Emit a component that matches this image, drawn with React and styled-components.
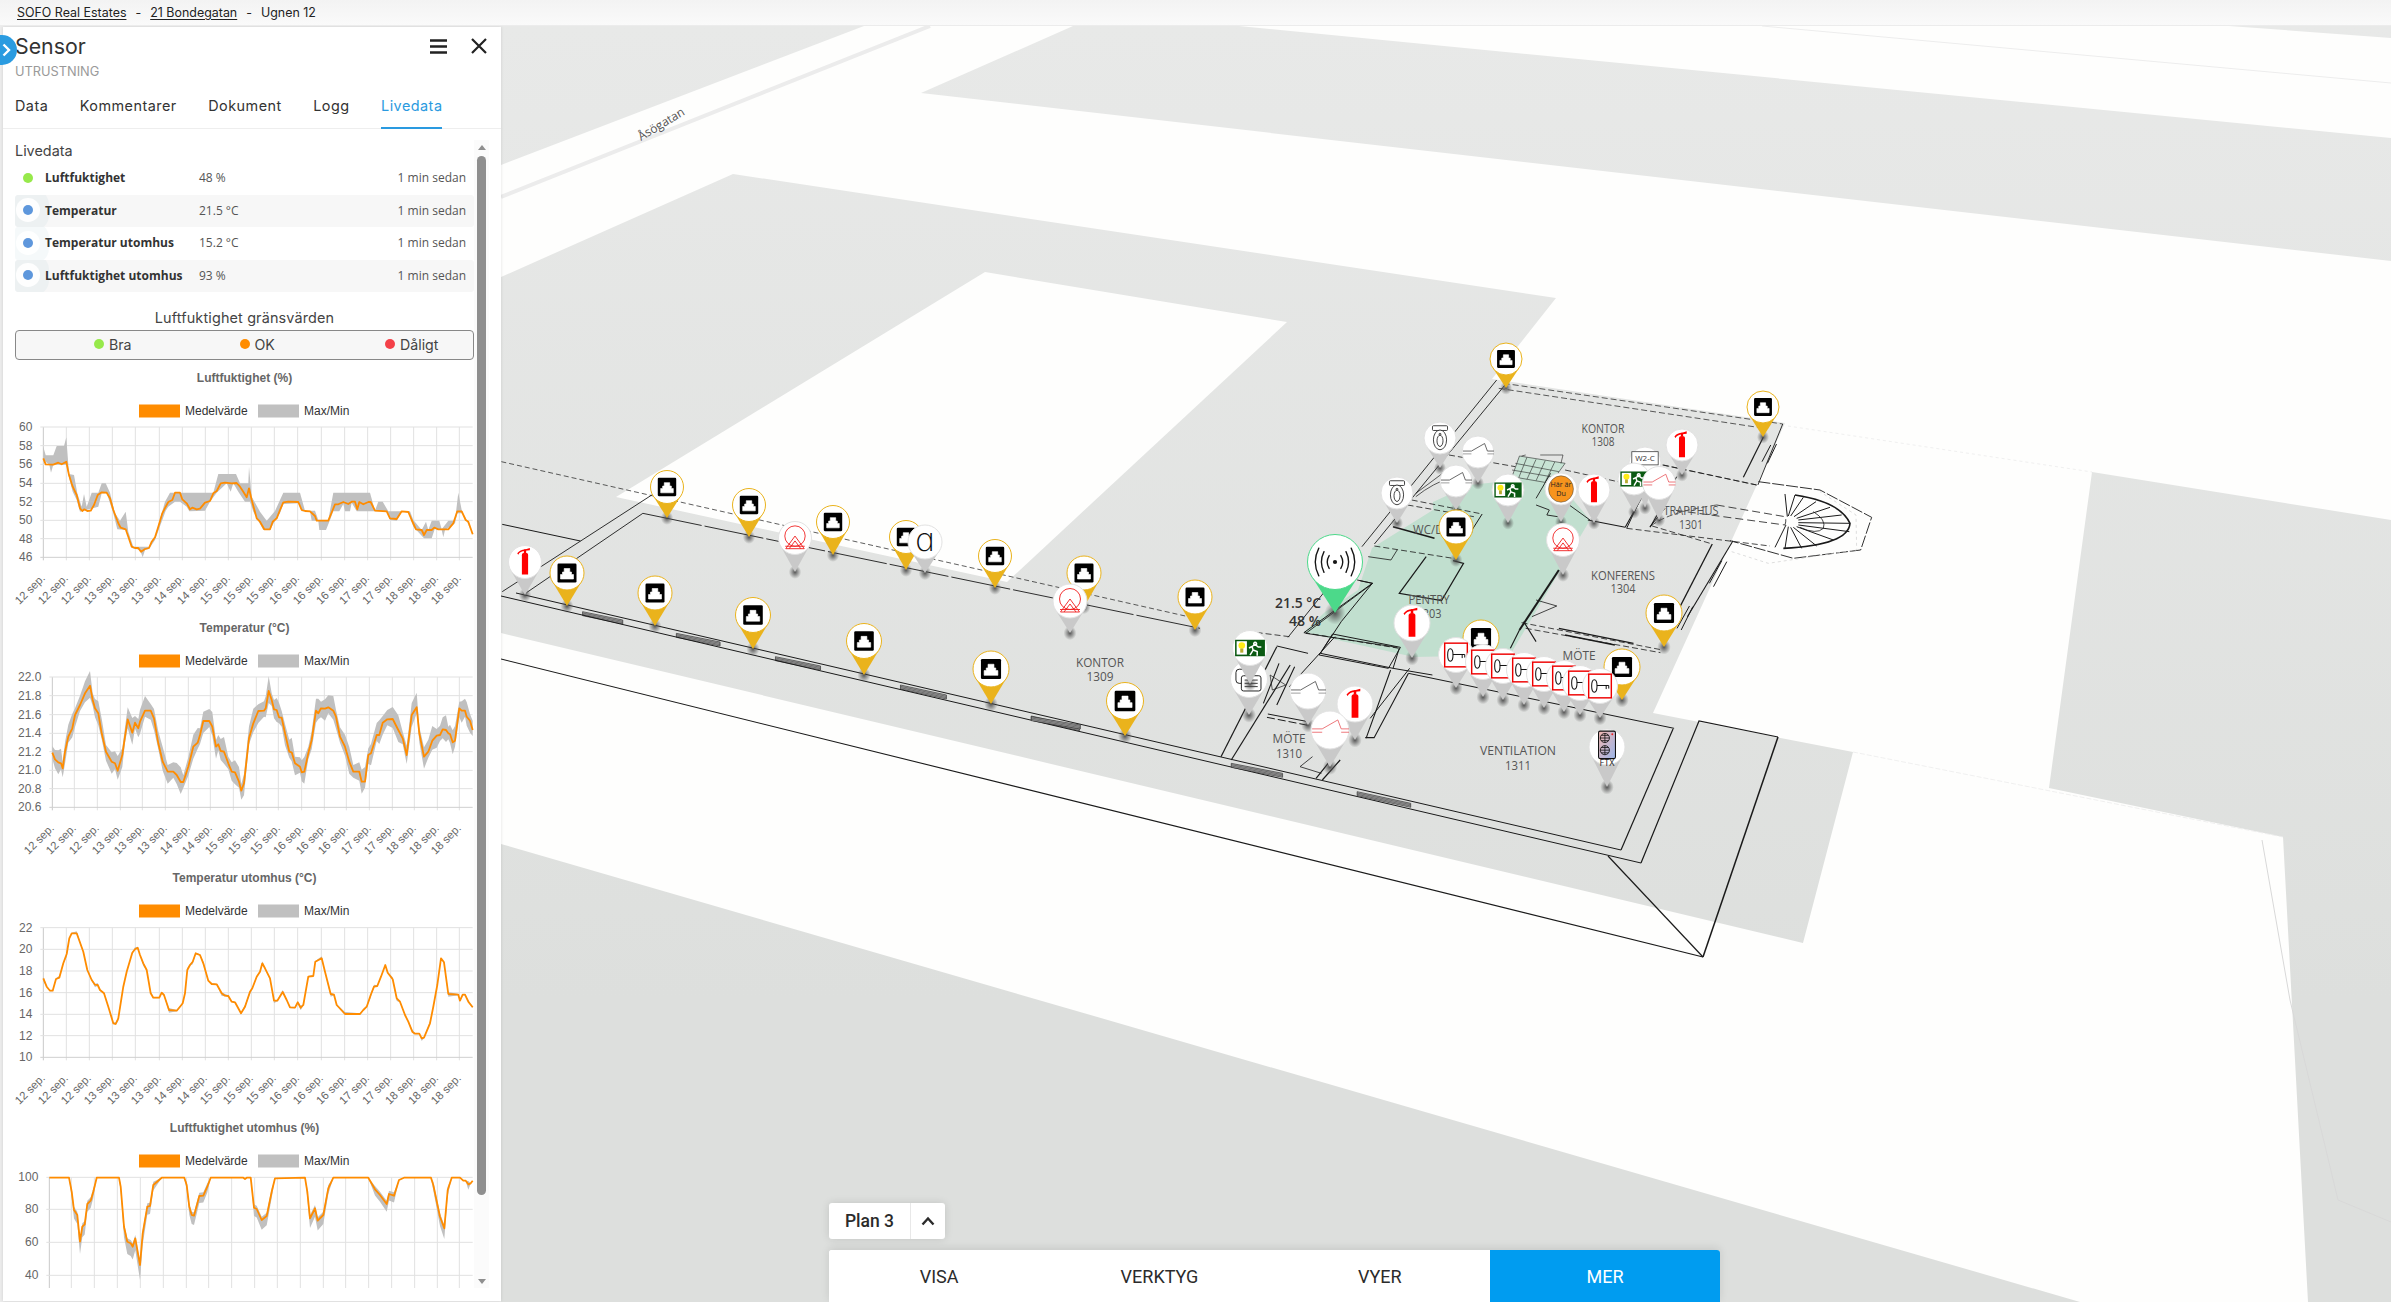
import React from 'react';
import styled, { createGlobalStyle } from 'styled-components';

const Global = createGlobalStyle`
  html, body { margin: 0; padding: 0; height: 100%; background: #fefefd; }
  #root { height: 100%; }
  * { box-sizing: border-box; }
`;

const Page = styled.div`
  width: 2391px; height: 1302px; display: flex; flex-direction: column; overflow: hidden;
  font-family: Inter, "Noto Sans", sans-serif; color: #333; background: #fefefd;
`;
const TopBar = styled.header`
  height: 26px; flex: none; display: flex; align-items: center; gap: 9px; padding: 0 17px;
  background: linear-gradient(#f3f3f3, #fafafa); border-bottom: 1px solid #ececec;
  font-size: 12.45px; color: #222; z-index: 3;
`;
const Crumb = styled.a`
  color: #222; text-decoration: underline; text-underline-offset: 2px;
`;
const Main = styled.main`
  flex: 1; min-height: 0; display: flex; padding-left: 3px; background: #ececec;
`;
const Panel = styled.aside`
  position: relative; margin-top: 1px; width: 498px; height: 1274px; flex: none; background: #fff; display: flex; flex-direction: column;
  padding-bottom: 13px; box-shadow: 0 0 3px rgba(0,0,0,.12); z-index: 2;
`;
const Toggle = styled.button`
  position: absolute; left: -16px; top: 8px; width: 30px; height: 30px; border: 0; padding: 0; border-radius: 50%;
  background: #2a9be0; display: flex; align-items: center; justify-content: flex-end; padding-right: 6px;
`;
const Head = styled.div`
  display: flex; justify-content: space-between; padding: 4px 14px 0 12px;
`;
const Title = styled.h1`
  margin: 0; font-size: 21.3px; font-weight: 400; line-height: 30px; color: #333;
`;
const Sub = styled.div`
  margin-top: 1px; font-size: 12.8px; line-height: 20px; color: #9a9a9a; padding-left: 12px;
`;
const HeadIcons = styled.div`
  display: flex; gap: 24px; align-items: center; height: 30px;
`;
const Tabs = styled.nav`
  height: 47px; flex: none; display: flex; border-bottom: 1px solid #eee; padding-left: 12px;
`;
const Tab = styled.a`
  height: 47px; margin-right: 31.5px; padding-top: 14px; font-size: 14.4px; line-height: 20px; font-weight: 400; color: ${p => p.$active ? '#2a9ae0' : '#333'};
  border-bottom: 2px solid ${p => p.$active ? '#2a9ae0' : 'transparent'}; letter-spacing: .48px;
`;
const Body = styled.div`
  flex: 1; min-height: 0; display: flex; padding: 11px 12px 0;
`;
const Scroller = styled.div`
  width: 459px; flex: none; overflow: hidden; height: 1148px;
`;
const Section = styled.div`
  font-size: 14.4px; line-height: 22px; color: #444;
`;
const Row = styled.div`
  height: 32.5px; display: grid; grid-template-columns: 30px 154px 1fr auto; align-items: center; padding: 0 8px 1px 0; overflow: hidden;
  background: ${p => p.$alt ? '#f7f7f7' : '#fff'}; border-radius: 3px; font-family: "Open Sans", "Noto Sans", sans-serif; font-size: 12px; color: #555;
`;
const Dot = styled.span`
  justify-self: start; margin-left: 8px; width: 10px; height: 10px; border-radius: 50%; background: ${p => p.$c};
  box-shadow: ${p => p.$halo ? '0 0 0 7px rgba(255,255,255,.9), 0 0 0 16px rgba(120,170,190,.07)' : 'none'};
`;
const Name = styled.span`
  font-weight: 700; color: #333; font-size: 12px; white-space: nowrap;
`;
const Cap = styled.div`
  margin-top: 15px; height: 22px; font-size: 14.4px; line-height: 22px; text-align: center; color: #444; letter-spacing: .15px;
`;
const LimitBox = styled.div`
  margin-top: 1px; height: 30px; border: 1px solid #888; border-radius: 4px; background: #f7f7f7; padding-bottom: 2px;
  display: grid; grid-template-columns: repeat(3, 145.5px); padding-left: 78px; align-items: center; font-size: 14.2px; color: #444;
`;
const Limit = styled.span`
  display: flex; align-items: center; gap: 5px;
`;
const LimitDot = styled.i`
  width: 10px; height: 10px; border-radius: 50%; background: ${p => p.$c};
`;
const ChartList = styled.div`
  margin-top: 5px; display: flex; flex-direction: column;
`;
const ChartSvg = styled.svg`
  display: block; width: 459px; height: 250px; flex: none; font-family: "Liberation Sans", Arial, sans-serif;
`;
const Track = styled.div`
  width: 15px; flex: none; height: 1148px; background: #fbfbfb; display: flex; flex-direction: column; align-items: center; padding: 5px 0 4px;
`;
const Thumb = styled.div`
  width: 9px; height: 1039px; margin-top: 6px; background: #8f8f8f; border-radius: 5px; flex: none;
`;
const ArrowUp = styled.div`
  width: 0; height: 0; border-left: 4.5px solid transparent; border-right: 4.5px solid transparent; border-bottom: 5px solid #8f8f8f; flex: none;
`;
const ArrowDown = styled(ArrowUp)`
  margin-top: auto; border-bottom: 0; border-top: 5px solid #8f8f8f;
`;
const MapArea = styled.section`
  position: relative; flex: 1; min-width: 0; background: #fefefd;
`;
const MapSvg = styled.svg`
  display: block; width: 1890px; height: 1276px; font-family: "Open Sans", "Noto Sans", sans-serif;
  path, line, polyline { vector-effect: non-scaling-stroke; }
`;
const Controls = styled.div`
  position: absolute; left: 328px; bottom: 0; display: flex; flex-direction: column; align-items: flex-start; gap: 11px;
  font-family: Roboto, sans-serif; color: #2b2b2b;
`;
const PlanBox = styled.div`
  height: 36px; width: 116px; display: grid; grid-template-columns: 81px 1fr; background: #fff; border-radius: 3px;
  box-shadow: 0 0 8px rgba(0,0,0,.12);
`;
const PlanLabel = styled.span`
  display: flex; align-items: center; justify-content: center; font-size: 17.5px; font-weight: 500;
`;
const PlanArrow = styled.span`
  display: flex; align-items: center; justify-content: center; border-left: 1px solid #e8e8e8;
`;
const Toolbar = styled.div`
  width: 891px; height: 52px; display: grid; grid-template-columns: repeat(3, 220.33px) 1fr; background: #fff; border-radius: 3px 3px 0 0;
  box-shadow: 0 -2px 8px rgba(0,0,0,.1); overflow: hidden;
`;
const ToolTab = styled.button`
  border: 0; font-family: Roboto, sans-serif; font-size: 18px; font-weight: 400; padding: 0; background: ${p => p.$active ? '#009cf0' : '#fff'}; color: ${p => p.$active ? '#fff' : '#2b2b2b'};
`;

/* ---------- chart data, written in crop coordinates (3 px per page px) ---------- */
const parse = s => s.trim().split(/\s+/).map(p => p.split(',').map(Number));
const D = {
  a1: parse(`130,325 137,343 160,344 175,338 185,343 199,335 207,375 218,410 230,435 240,475 247,483 253,478 262,483 272,482 282,465 293,435 305,427 320,428 330,445 340,480 355,520 362,533 377,538 385,560 395,590 405,594 415,594 423,605 435,597 447,594 455,575 465,562 475,530 487,490 497,470 505,456 517,450 525,428 540,428 547,448 560,460 570,478 577,473 590,478 600,476 615,458 630,453 640,430 650,423 662,400 675,398 695,400 710,399 720,410 730,425 740,442 747,415 755,450 770,505 780,515 793,538 810,538 818,515 830,505 840,480 850,457 865,455 895,456 905,480 915,483 930,484 945,498 950,512 985,512 998,480 1005,463 1015,463 1030,456 1045,462 1055,455 1065,455 1072,478 1078,456 1090,463 1105,456 1112,456 1125,482 1160,484 1170,505 1190,507 1205,484 1225,486 1235,510 1248,538 1265,540 1272,555 1280,540 1295,540 1303,533 1315,538 1345,538 1360,520 1372,484 1385,484 1397,510 1405,515 1418,553`),
  u1: parse(`130,290 137,316 160,316 170,288 192,288 199,262 207,372 222,375 232,430 245,470 252,432 260,470 275,428 295,428 305,400 317,400 330,428 345,490 360,512 377,485 385,545 400,590 423,590 447,590 465,560 495,455 510,428 640,428 655,372 708,372 720,400 745,400 747,350 755,440 780,485 800,512 825,483 850,428 900,428 915,482 945,482 955,510 985,510 1000,428 1110,428 1125,482 1135,455 1148,455 1165,484 1230,484 1240,510 1265,540 1278,515 1285,540 1295,512 1318,512 1325,538 1345,512 1365,512 1375,428 1385,480 1418,553`),
  l1: parse(`130,330 148,344 153,368 160,344 199,344 210,395 218,425 230,450 240,485 295,470 305,430 320,430 340,490 352,538 380,540 395,594 420,600 428,622 435,600 447,597 465,570 487,510 497,482 505,470 525,455 540,455 560,470 568,484 615,482 630,455 650,428 680,400 692,425 700,400 715,425 735,455 750,455 760,485 775,512 790,540 810,540 825,512 840,490 850,462 895,460 905,484 930,484 935,512 955,512 958,540 978,540 990,510 1000,484 1018,484 1030,462 1035,484 1050,484 1055,458 1070,484 1160,484 1170,510 1190,512 1205,486 1225,486 1240,530 1272,565 1295,565 1305,535 1325,540 1330,562 1335,540 1365,520 1372,490 1390,490 1405,520 1418,555`),
  a2: parse(`157,1208 165,1228 175,1237 183,1240 188,1255 195,1205 205,1160 217,1135 225,1095 240,1065 255,1030 270,1007 278,1050 285,1075 295,1090 305,1150 318,1205 335,1235 345,1240 353,1262 367,1215 375,1160 383,1108 397,1148 405,1118 415,1135 420,1115 435,1082 452,1082 462,1105 475,1180 488,1235 503,1265 520,1265 530,1275 542,1296 550,1296 565,1250 580,1190 593,1178 600,1155 610,1113 628,1113 637,1130 648,1190 655,1183 662,1203 672,1205 685,1240 695,1265 705,1267 717,1295 724,1322 732,1300 747,1165 760,1120 775,1083 792,1082 797,1075 806,1023 815,1050 822,1078 830,1080 837,1102 845,1103 855,1150 868,1205 875,1207 885,1240 900,1250 905,1267 913,1265 925,1210 935,1170 948,1082 955,1090 963,1075 975,1076 985,1072 1000,1082 1008,1100 1020,1160 1035,1190 1048,1235 1060,1265 1078,1265 1085,1295 1095,1295 1105,1215 1113,1210 1130,1155 1138,1155 1148,1118 1162,1108 1178,1107 1195,1140 1208,1165 1220,1215 1235,1095 1250,1072 1258,1150 1272,1220 1285,1205 1297,1172 1310,1157 1320,1155 1328,1138 1338,1140 1345,1150 1350,1152 1358,1177 1365,1172 1378,1075 1385,1082 1395,1082 1400,1100 1410,1112 1418,1140`),
  a3: parse(`130,445 140,470 150,482 158,482 168,447 178,443 190,400 200,372 208,325 215,310 230,310 250,365 262,420 275,450 285,464 293,465 300,480 312,490 325,530 340,580 347,582 355,565 370,470 380,425 397,368 405,358 413,353 420,375 430,400 440,420 452,490 460,503 478,503 485,488 492,495 507,540 530,542 540,530 548,520 555,490 562,420 570,405 578,395 587,370 600,375 610,400 625,452 635,462 650,463 665,490 675,497 685,498 695,515 705,517 723,550 735,530 750,485 757,475 770,440 780,425 787,400 795,415 810,445 822,512 832,512 848,486 860,510 870,532 885,533 893,517 902,533 910,525 925,440 940,438 946,395 965,385 975,425 992,492 1002,494 1010,525 1035,552 1080,552 1090,540 1100,530 1112,495 1122,470 1132,468 1143,440 1156,405 1163,428 1178,448 1190,505 1200,515 1215,555 1225,575 1237,605 1245,611 1258,611 1265,625 1272,623 1290,580 1300,530 1312,465 1323,385 1332,397 1345,492 1375,494 1380,512 1388,494 1395,494 1405,515 1418,532`),
  a4: parse(`148,1043 207,1043 215,1085 222,1140 232,1155 240,1235 247,1190 254,1183 262,1122 272,1112 280,1085 290,1043 357,1043 362,1070 372,1190 382,1235 392,1240 398,1250 406,1225 420,1305 428,1210 442,1130 450,1128 460,1065 485,1043 553,1043 560,1065 568,1130 575,1155 582,1157 598,1098 610,1097 622,1070 632,1043 730,1043 735,1047 740,1043 752,1043 762,1133 770,1137 785,1170 800,1158 815,1085 825,1045 915,1043 922,1085 930,1165 945,1135 953,1172 970,1155 985,1075 1000,1043 1105,1043 1125,1078 1140,1095 1160,1122 1167,1092 1182,1097 1197,1050 1212,1043 1293,1043 1300,1065 1320,1160 1333,1195 1343,1080 1355,1043 1380,1043 1390,1052 1397,1052 1405,1063 1412,1060 1418,1052`),
};
const offset = (arr, f) => arr.map(([x, y], i) => [x, y + f(y, i)]);
const LABELS = ['12','12','12','13','13','13','14','14','15','15','15','16','16','16','17','17','18','18','18'];
const CHARTS = [
  { title: 'Luftfuktighet (%)', off: -15, line: D.a1, up: D.u1, lo: D.l1,
    xs: [130,199,268,337,406,478,547,616,685,754,823,893,964,1034,1103,1172,1241,1310,1378],
    ys: [[231,'60'],[287,'58'],[343,'56'],[400,'54'],[455,'52'],[511,'50'],[566,'48'],[622,'46']] },
  { title: 'Temperatur (°C)', off: -265, line: D.a2,
    up: offset(D.a2, (y, i) => -20 - (i % 4) * 8), lo: offset(D.a2, (y, i) => 18 + (i % 3) * 9),
    xs: [157,223,292,361,427,496,565,631,700,769,835,905,973,1039,1108,1177,1243,1312,1378],
    ys: [[981,'22.0'],[1037,'21.8'],[1094,'21.6'],[1150,'21.4'],[1205,'21.2'],[1261,'21.0'],[1316,'20.8'],[1372,'20.6']] },
  { title: 'Temperatur utomhus (°C)', off: -35, line: D.a3,
    up: offset(D.a3, (y, i) => (i % 5 === 0 ? -6 : -2)), lo: offset(D.a3, (y, i) => (i % 7 === 0 ? 8 : 2)),
    xs: [130,199,268,337,406,478,547,616,685,754,823,893,964,1034,1103,1172,1241,1310,1378],
    ys: [[293,'22'],[358,'20'],[423,'18'],[488,'16'],[553,'14'],[617,'12'],[682,'10']] },
  { title: 'Luftfuktighet utomhus (%)', off: -285, line: D.a4, clipped: true,
    up: offset(D.a4, (y) => (y > 1060 ? -10 : 0)), lo: offset(D.a4, (y) => (y > 1060 ? 16 + (y - 1060) * .12 : 1)),
    xs: [148,214,283,352,421,490,559,626,695,764,832,901,970,1037,1106,1175,1244,1312,1378],
    ys: [[1042,'100'],[1138,'80'],[1237,'60'],[1336,'40'],[1434,'']] },
];
const toPts = (arr, off) => arr.map(([x, y]) => `${(x / 3).toFixed(1)},${(y / 3 + off).toFixed(1)}`).join(' ');

function Chart({ c }) {
  const top = c.ys[0][0] / 3 + c.off;
  const bottom = c.ys[c.ys.length - 1][0] / 3 + c.off;
  return (
    <ChartSvg viewBox="15 0 459 250">
      <text x="244.5" y="17" textAnchor="middle" fontSize="12" fontWeight="700" fill="#666">{c.title}</text>
      <rect x="139" y="39.5" width="41" height="13" fill="#ff8c00" />
      <text x="185" y="50" fontSize="12" fill="#333">Medelvärde</text>
      <rect x="258" y="39.5" width="41" height="13" fill="#c0c0c0" />
      <text x="304" y="50" fontSize="12" fill="#333">Max/Min</text>
      {c.xs.map((x, i) => (
        <line key={i} x1={x / 3} x2={x / 3} y1={top} y2={bottom + 3} stroke={i === 0 ? '#c9c9c9' : '#e1e1e1'} strokeWidth="1" />
      ))}
      {c.ys.map(([y, t], i) => (
        <g key={i}>
          <line x1={c.xs[0] / 3 - 3} x2="472.7" y1={y / 3 + c.off} y2={y / 3 + c.off} stroke={i === c.ys.length - 1 ? '#cfcfcf' : '#e1e1e1'} strokeWidth="1" />
          {t && <text x={c.xs[0] / 3 - 11} y={y / 3 + c.off + 4} textAnchor="end" fontSize="12" fill="#666">{t}</text>}
        </g>
      ))}
      <polygon points={toPts(c.up, c.off) + ' ' + toPts([...c.lo].reverse(), c.off)} fill="#c0c0c0" />
      <polyline points={toPts(c.line, c.off)} fill="none" stroke="#ff8c00" strokeWidth="1.8" strokeLinejoin="round" />
      {!c.clipped && c.xs.map((x, i) => (
        <text key={i} transform={`translate(${x / 3 + 2.4} ${bottom + 21.5}) rotate(-45)`} textAnchor="end" fontSize="11.3" fill="#666">{LABELS[i]} sep.</text>
      ))}
    </ChartSvg>
  );
}

/* ---------- pin icons ---------- */
const PortIcon = () => (
  <g>
    <rect x="-9.5" y="-9.5" width="19" height="19" rx="1.2" fill="#000" />
    <path d="M-6.5,6 V1.5 H-4.5 V-1 H-2.8 V-4.5 H2.8 V-1 H4.5 V1.5 H6.5 V6 Z" fill="#fff" stroke="#fff" strokeWidth=".6" strokeLinejoin="round" />
  </g>
);
const ExtIcon = () => (
  <g fill="#f00">
    <path d="M-3.2,-7 Q-3.2,-9.5 0,-9.5 Q3.2,-9.5 3.2,-7 V13 H-3.2 Z" />
    <rect x="-1.2" y="-13" width="2.4" height="4" />
    <path d="M-8,-9 Q-5,-13 0,-13 L5,-14.5 V-12 L0,-11.5 Q-5,-11 -7,-7.5 Z" />
  </g>
);
const HoodIcon = () => (
  <g fill="none" stroke="#f01c1c" strokeWidth=".9">
    <circle cx="0" cy="-2" r="10.5" />
    <path d="M-9.5,11 L0,-2 L9.5,11 Z M-6,11 L0,3 L6,11 M-10,8.5 H10" />
  </g>
);
const StairIcon = ({ c = '#444' }) => (
  <g fill="none" stroke={c} strokeWidth=".8">
    <path d="M-16,-1 H-7 L7,-9 L10,-1 H17" />
    <path d="M-16,2 H-7 M10,2 H17" stroke={c === '#444' ? '#888' : c} />
  </g>
);
const ToiletIcon = () => (
  <g fill="#fff" stroke="#222" strokeWidth=".9">
    <rect x="-8" y="-13" width="16" height="5" rx="1" />
    <ellipse cx="0" cy="2" rx="7" ry="10.5" />
    <ellipse cx="0" cy="3" rx="3.2" ry="6" />
    <circle cx="0" cy="-4" r="1" />
  </g>
);
const ExitIcon = () => (
  <g>
    <rect x="-14.5" y="-8" width="29" height="16" fill="#0a5a12" />
    <rect x="-13" y="-6.6" width="10" height="13" fill="#fff" />
    <circle cx="-8" cy="-2.5" r="3.2" fill="#ffec17" />
    <rect x="-9.5" y="0.5" width="3" height="4" fill="#b8ac30" />
    <path d="M5,-5.5 a1.4,1.4 0 1 0 .01,0 M0,7 L3,2 L2,-1.5 L5,-3.5 L8,-1 H11 M3,2 L7,3.5 L7,7.5 M2,-1.5 L-1,0" stroke="#fff" strokeWidth="1.5" fill="none" />
  </g>
);
const KeyIcon = () => (
  <g>
    <rect x="-11" y="-11.5" width="22" height="23" fill="#fff" stroke="#e00" strokeWidth="1.4" />
    <ellipse cx="-5.5" cy="0" rx="2.6" ry="6" fill="none" stroke="#111" strokeWidth="1" />
    <path d="M-3,-.5 H8.5 M6,-.5 V3 M8.5,-.5 V2.5" stroke="#111" strokeWidth="1" fill="none" />
  </g>
);
const FtxIcon = () => (
  <g>
    <defs>
      <linearGradient id="ftxg" x1="0" y1="0" x2="1" y2="1">
        <stop offset="0" stopColor="#f3b7b0" />
        <stop offset="1" stopColor="#9bb6ea" />
      </linearGradient>
    </defs>
    <rect x="-8" y="-15" width="16" height="26" rx="1.5" fill="url(#ftxg)" stroke="#111" strokeWidth="1" />
    <g fill="none" stroke="#111" strokeWidth=".8">
      <circle cx="-2" cy="-8.5" r="4.3" /><path d="M-6.3,-8.5 H2.3 M-2,-12.8 V-4.2 M-5.5,-11 H1.5 M-5.5,-6 H1.5" />
      <circle cx="-2" cy="3" r="4.3" /><path d="M-6.3,3 H2.3 M-2,-1.3 V7.3 M-5.5,.5 H1.5 M-5.5,5.5 H1.5" />
    </g>
    <circle cx="5" cy="-12" r=".9" fill="#e22" />
    <text y="18" textAnchor="middle" fontSize="8.5" fill="#222">FTX</text>
  </g>
);
const PrinterIcon = () => (
  <g fill="#fff" stroke="#222" strokeWidth=".9">
    <rect x="-12" y="-9" width="11" height="13" rx="3" />
    <rect x="-7" y="-3" width="18" height="14" rx="2" />
    <path d="M-4,1 H8 M-4,4 H8 M-4,7 H8" />
  </g>
);
const AIcon = () => (
  <text x="0" y="9" textAnchor="middle" fontSize="33" fontWeight="200" fontFamily="Inter, sans-serif" fill="#111">ɑ</text>
);
const WcIcon = () => (
  <g>
    <rect x="-14" y="-12" width="28" height="14" fill="#fff" stroke="#333" strokeWidth=".8" />
    <text y="-2" textAnchor="middle" fontSize="8.5" fill="#333">W2-C</text>
  </g>
);
const Radio = () => (
  <g fill="none" stroke="#151515" strokeWidth="1.35" strokeLinecap="round">
    <circle cx="0" cy="0" r="1.3" fill="#151515" stroke="none" />
    <path d="M-3.6,-4 Q-6,0 -3.6,4 M3.6,-4 Q6,0 3.6,4 M-6.8,-6.4 Q-10,0 -6.8,6.4 M6.8,-6.4 Q10,0 6.8,6.4 M-10,-8.6 Q-14.4,0 -10,8.6 M10,-8.6 Q14.4,0 10,8.6" />
  </g>
);
const Here = () => (
  <g>
    <ellipse rx="13.2" ry="14" fill="#f7941d" stroke="#333" strokeWidth=".5" />
    <text y="-2" textAnchor="middle" fontSize="7.6" fill="#222">Här är</text>
    <text y="7" textAnchor="middle" fontSize="7.6" fill="#222">Du</text>
  </g>
);
const ICONS = {
  port: PortIcon, ext: ExtIcon, hood: HoodIcon, stair: StairIcon, stairRed: () => <StairIcon c="#e8555b" />,
  toilet: ToiletIcon, exit: ExitIcon, key: KeyIcon, ftx: FtxIcon, printer: PrinterIcon, a: AIcon, wc: WcIcon, radio: Radio, here: Here,
};

function Pin({ x, y, tip, r = 17, icon, tone = 'gray' }) {
  const Icon = ICONS[icon];
  const cone = tone === 'yellow' ? '#eab31c' : tone === 'green' ? '#4cd98a' : '#c9c9c9';
  const stroke = tone === 'yellow' ? '#eab31c' : tone === 'green' ? '#4cd98a' : '#e2e2e2';
  const h = tip - y;
  const tx = (r * r) / h;
  const ty = Math.sqrt(Math.max(r * r - tx * tx, 0));
  return (
    <g>
      <ellipse cx={x} cy={tip} rx={r * .38} ry={r * .42} fill="url(#pinShadow)" />
      <path d={`M${x - ty},${y + tx} L${x},${tip} L${x + ty},${y + tx} Z`} fill={cone} />
      <circle cx={x} cy={y} r={r} fill="#fff" stroke={stroke} strokeWidth="1" />
      <g transform={`translate(${x} ${y}) scale(${r / 17})`}><Icon /></g>
    </g>
  );
}

const PINS = [
  ['port',667,487,518,'yellow',16.5],['port',749,505,537,'yellow',16.5],['hood',795,538,572,'gray',16.5],['port',833,522,555,'yellow',16.5],
  ['port',906,537,570,'yellow',16.5],['a',925,542,573,'gray',17],['port',995,556,588,'yellow',16.5],
  ['ext',525,562,595,'gray',16.5],['port',567,573,606,'yellow',17],['port',655,593,626,'yellow',17],['port',753,615,649,'yellow',17.5],
  ['port',864,641,675,'yellow',17.5],['port',1084,573,607,'yellow',17],['hood',1070,601,633,'gray',17],['port',1195,597,630,'yellow',17],
  ['port',991,669,704,'yellow',18],['port',1125,701,736,'yellow',18.5],
  ['printer',1249,679,715,'gray',18.5],['exit',1250,648,684,'gray',17.5],['stair',1308,691,725,'gray',18],['ext',1355,704,740,'gray',18],['stairRed',1330,730,767,'gray',19],
  ['port',1506,359,388,'yellow',16],['port',1763,407,437,'yellow',16],['toilet',1440,438,468,'gray',16],['stair',1478,452,483,'gray',16],
  ['toilet',1397,493,523,'gray',16],['stair',1456,481,510,'gray',16],['exit',1508,490,523,'gray',16],['here',1561,489,522,'gray',16],['ext',1594,490,523,'gray',16],
  ['ext',1682,445,475,'gray',16],['wc',1645,463,508,'gray',16],['exit',1634,479,512,'gray',16],['stairRed',1659,483,520,'gray',16.5],
  ['port',1456,527,560,'yellow',17],['hood',1563,540,575,'gray',16.5],['radio',1335,562,613,'green',27.5],['ext',1412,623,658,'gray',18],['port',1664,613,647,'yellow',18],
  ['port',1481,638,670,'yellow',18],['port',1622,667,700,'yellow',18],
  ['key',1456,655,688,'gray',17.5],['key',1483,662,697,'gray',17.5],['key',1503,666,700,'gray',17.5],['key',1524,670,705,'gray',17.5],
  ['key',1544,674,708,'gray',17.5],['key',1564,678,712,'gray',17.5],['key',1580,683,715,'gray',17.5],['key',1600,686,718,'gray',17.5],
  ['ftx',1607,747,787,'gray',18],
];

/* ---------- floor-plan line work, written in crop coordinates ---------- */
const Z6 = 'translate(500 460) scale(.44643 .33333)';
const Z5 = 'translate(1000 560) scale(.44643 .33333)';
const Z4 = 'translate(1250 320) scale(.41459 .33333)';
const Z12 = 'translate(1600 420) scale(.33333)';

const Stroke = ({ d, w = 1, dash, c = '#1a1a1a' }) => <path d={d} fill="none" stroke={c} strokeWidth={w} strokeDasharray={dash} />;

const Hatch = ({ x1, y1, x2, y2 }) => (
  <g>
    <path d={`M${x1},${y1} L${x2},${y2} L${x2},${y2 + 12} L${x1},${y1 + 12} Z`} fill="#a8a8a8" stroke="#222" strokeWidth=".6" />
    <Stroke d={`M${x1},${y1 + 4} L${x2},${y2 + 4} M${x1},${y1 + 8} L${x2},${y2 + 8}`} w={.5} c="#333" />
  </g>
);

function Plan() {
  return (
    <MapSvg viewBox="501 26 1890 1276">
      <defs>
        <linearGradient id="fog" gradientUnits="userSpaceOnUse" x1="0" y1="26" x2="0" y2="1000">
          <stop offset="0" stopColor="#e8e9e8" />
          <stop offset="1" stopColor="#dddfdd" />
        </linearGradient>
        <radialGradient id="pinShadow">
          <stop offset="0" stopColor="#444" stopOpacity=".9" />
          <stop offset="1" stopColor="#555" stopOpacity="0" />
        </radialGradient>
      </defs>
      <g fill="url(#fog)">
        <polygon points="501,26 864,26 501,165" />
        <polygon points="921,93 1073,26 1239,26 2391,138 2391,261" />
        <polygon points="2229,26 2391,26 2391,38" />
        <polygon points="501,277 733,174 1556,298 1492,379 1785,423 1653,713 1853,752 1803,943 501,633" />
        <polygon points="2092,472 2391,520 2391,1302 2308,1302 2283,837 2049,788" />
        <polygon points="501,844 2080,1302 501,1302" />
      </g>
      <polygon points="985,272 1287,322 1007,582 616,497" fill="#fefefd" />
      <path d="M501,197 L930,26" stroke="#ececec" strokeWidth="4" fill="none" />
      <Stroke d="M1762,26 L2391,83" c="#ededed" w={1} />
      <Stroke d="M1788,426 L2092,472" c="#f0f0f0" w={1} dash="3 3" />
      <Stroke d="M1853,752 L2283,837" c="#ececec" w={.8} dash="5 2" />
      <Stroke d="M2262,840 L2290,1000 L2338,1200 L2391,1222" c="#d8d8d8" w={1} />
      <text transform="translate(641 141) rotate(-31)" fontSize="12" fill="#555">Åsögatan</text>

      <polygon points="1433,502 1470,485 1515,480 1520,457 1563,463 1555,478 1590,520 1510,655 1414,657 1337,640 1304,632 1325,612 1358,590 1372,548 1433,510" fill="#c1dfcf" />

      <g transform={Z6}>
        <Stroke d="M3,5 L1568,478" w={.7} dash="5 3" />
        <Stroke d="M5,395 L340,105" w={.9} />
        <Stroke d="M55,402 L320,160" w={.9} />
        <Stroke d="M320,160 L1568,505" w={.9} dash="60 3" />
        <Stroke d="M5,193 L180,243" w={1} />
        <Hatch x1={185} y1={455} x2={275} y2={480} />
        <Hatch x1={395} y1={520} x2={493} y2={546} />
        <Hatch x1={617} y1={590} x2={718} y2={618} />
        <Hatch x1={897} y1={675} x2={1000} y2={705} />
        <Hatch x1={1190} y1={768} x2={1298} y2={800} />
      </g>
      <Stroke d="M516,593 L1621,850" w={1} />
      <Stroke d="M501,596 L1641,863" w={1} />
      <Stroke d="M501,659 L1703,957" w={1.1} />
      <Stroke d="M1703,957 L1608,856" w={1.2} />
      <Stroke d="M1703,957 L1778,737" w={1.5} />
      <Stroke d="M1778,737 L1699,721 L1641,863" w={1.2} />
      <Stroke d="M1673,729 L1621,850" w={1.2} />

      <g transform={Z5}>
        <Stroke d="M495,590 L620,260" w={1.2} />
        <Stroke d="M518,600 L650,315" w={1.2} />
        <Stroke d="M600,462 L690,485" w={1} />
        <Stroke d="M598,472 L690,496" w={1} dash="8 3" />
        <Stroke d="M708,655 L750,585 M722,660 L762,600" w={1.2} />
        <Stroke d="M820,535 L875,330 M818,533 L838,533 L915,340" w={1.1} />
        <Stroke d="M620,258 L690,280 M715,285 L870,325 L897,262 L745,222 L715,285" w={1} />
        <Stroke d="M915,340 L1510,505" w={1} />
        <Stroke d="M645,232 L730,90 M685,220 L835,70 L800,60 M685,220 L890,262" w={.9} />
        <Stroke d="M700,590 L672,620 L720,640" w={.8} />
        <Stroke d="M605,345 L640,375 L610,390 Z" w={.7} />
        <Stroke d="M590,430 L625,310 M620,435 L660,320" w={1.1} />
        <Hatch x1={70} y1={470} x2={180} y2={495} />
        <Hatch x1={518} y1={610} x2={633} y2={640} />
        <Hatch x1={800} y1={695} x2={920} y2={730} />
      </g>

      <g transform={Z4}>
        <Stroke d="M595,180 L270,680 M615,195 L300,672" w={.9} />
        <Stroke d="M612,190 L1285,312" dash="6 3" w={.7} />
        <Stroke d="M600,205 L1225,322" dash="6 3" w={.7} />
        <Stroke d="M1238,352 L1190,472" w={1.2} />
        <Stroke d="M1270,372 L1248,430 M1256,375 L1235,425" w={1} />
        <Stroke d="M480,405 L640,440 M760,450 L905,490" dash="6 3" w={.8} />
        <Stroke d="M995,435 L1222,495" dash="6 3" w={.8} />
        <Stroke d="M815,600 L905,622 M905,622 L955,510 M965,622 L1005,535" w={1.1} />
        <Stroke d="M970,618 L1115,672" dash="6 3" w={.8} />
        <Stroke d="M1115,672 L1000,950" w={1.3} />
        <Stroke d="M1165,662 L1055,890" w={1.1} />
        <Stroke d="M1150,725 L1118,800 M1138,722 L1108,790 M1068,860 L1040,930 M1060,858 L1030,925" w={1} />
        <Stroke d="M1285,312 L1225,495" w={.9} />
        <Stroke d="M655,908 L995,990 M665,925 L990,998" dash="6 3" w={.8} />
        <Stroke d="M745,925 L925,970 M760,945 L880,975" w={1.3} />
        <Stroke d="M690,840 L740,858 L680,890" w={.8} />
        <Stroke d="M745,750 L650,930" w={2} />
        <Stroke d="M650,930 L628,985 M660,905 L690,965" w={1.1} />
        <Stroke d="M300,678 L490,715" dash="6 3" w={.8} />
        <Stroke d="M390,540 L560,582 M380,555 L540,590" dash="6 3" w={.8} />
        <Stroke d="M560,582 L510,680" w={1} />
        <Stroke d="M345,620 L445,655" w={1.5} />
        <Stroke d="M425,710 L360,820 L462,842 L515,730 L490,722" w={1.2} />
        <Stroke d="M295,790 L130,938 M265,782 L295,790 L220,905" w={1} />
        <Stroke d="M355,690 L340,720 L285,710" w={.8} />
        <Stroke d="M130,938 L360,985" dash="6 3" w={.9} />
        <Stroke d="M220,905 L170,1000 L345,1045 L360,985" w={1} />
        <Stroke d="M205,950 L95,1100 M385,1045 L290,1195 M345,1045 L440,1065" w={1} />
        <Stroke d="M95,950 L0,935" dash="6 3" w={.8} />
        <Stroke d="M400,530 Q440,490 490,470 M400,520 L470,455" w={.7} />
        <polygon points="650,408 760,430 725,490 632,470" fill="#c7e3d4" />
        <Stroke d="M650,408 L760,430 L725,490 L632,470 Z M640,430 L745,455 M632,450 L735,472 M668,412 L648,474 M690,418 L668,478 M712,422 L690,482 M735,426 L712,486" w={.6} c="#2a2a2a" />
        <Stroke d="M655,408 L665,405 M700,405 L755,405 L750,430" w={.6} />
        <Stroke d="M690,535 L725,460 M690,555 L722,570 L716,585 L742,590" w={.9} />
        <Stroke d="M770,555 L820,600" w={.9} />
      </g>

      <g transform={Z12}>
        <Stroke d="M190,135 L470,195" dash="6 3" w={.8} />
        <Stroke d="M80,325 L510,378" dash="6 3" w={.8} />
        <Stroke d="M475,185 L660,210 L815,292 L782,390 L580,415 L390,362" dash="12 2" w={.9} />
        <Stroke d="M395,395 L505,430 L770,390 L768,285 L660,215" c="#d0d0d0" dash="3 3" w={.7} />
        <Stroke d="M350,255 L555,290 Q560,300 555,315 L220,270" dash="8 4" w={.8} />
        <Stroke d="M350,255 Q205,275 150,320" dash="6 3" w={.7} />
        <Stroke d="M585,225 Q720,245 750,310 Q745,375 550,385" w={1.6} />
        <Stroke d="M640,275 Q680,300 670,325 Q650,345 600,322" w={.8} />
        <Stroke d="M555,222 L562,290 M585,225 L565,288 M610,232 L572,288 M648,245 L582,290 M690,262 L590,295 M725,285 L595,300 M750,310 L595,308 M748,335 L595,315 M700,360 L590,320 M650,378 L580,322 M605,385 L572,322 M555,385 L565,320 M525,382 L558,315" w={1} />
        <Stroke d="M230,170 L200,230 M115,250 L80,325 M195,265 L150,320" w={1} />
      </g>

      <g fill="#555" textAnchor="middle" fontSize="13">
        <text x="1100" y="667" textLength="48" lengthAdjust="spacingAndGlyphs">KONTOR</text><text x="1100" y="681" textLength="27" lengthAdjust="spacingAndGlyphs">1309</text>
        <text x="1603" y="433" textLength="43" lengthAdjust="spacingAndGlyphs">KONTOR</text><text x="1603" y="446" textLength="23" lengthAdjust="spacingAndGlyphs">1308</text>
        <text x="1623" y="580" textLength="64" lengthAdjust="spacingAndGlyphs">KONFERENS</text><text x="1623" y="593" textLength="25" lengthAdjust="spacingAndGlyphs">1304</text>
        <text x="1691" y="515" textLength="55" lengthAdjust="spacingAndGlyphs">TRAPPHUS</text><text x="1691" y="529" textLength="24" lengthAdjust="spacingAndGlyphs">1301</text>
        <text x="1429" y="604" textLength="41" lengthAdjust="spacingAndGlyphs">PENTRY</text><text x="1429" y="618" textLength="25" lengthAdjust="spacingAndGlyphs">1303</text>
        <text x="1443" y="534" textLength="60" lengthAdjust="spacingAndGlyphs">WC/D 1305</text>
        <text x="1289" y="743" textLength="33" lengthAdjust="spacingAndGlyphs">MÖTE</text><text x="1289" y="758" textLength="26" lengthAdjust="spacingAndGlyphs">1310</text>
        <text x="1518" y="755" textLength="76" lengthAdjust="spacingAndGlyphs">VENTILATION</text><text x="1518" y="770" textLength="26" lengthAdjust="spacingAndGlyphs">1311</text>
        <text x="1579" y="660" textLength="33" lengthAdjust="spacingAndGlyphs">MÖTE</text>
      </g>
      <g fill="#333" textAnchor="middle" fontSize="15" fontWeight="600">
        <text x="1298" y="608" textLength="46" lengthAdjust="spacingAndGlyphs">21.5 °C</text>
        <text x="1305" y="626" textLength="32" lengthAdjust="spacingAndGlyphs">48 %</text>
      </g>

      {PINS.map(([icon, x, y, tip, tone, r], i) => <Pin key={i} icon={icon} x={x} y={y} tip={tip} tone={tone} r={r} />)}
    </MapSvg>
  );
}

const ROWS = [
  ['Luftfuktighet', '48 %', '#97e94b', false],
  ['Temperatur', '21.5 °C', '#5e97dc', true],
  ['Temperatur utomhus', '15.2 °C', '#5e97dc', false],
  ['Luftfuktighet utomhus', '93 %', '#5e97dc', true],
];

export default function App() {
  return (
    <Page>
      <Global />
      <TopBar>
        <Crumb>SOFO Real Estates</Crumb><span>-</span>
        <Crumb>21 Bondegatan</Crumb><span>-</span>
        <span>Ugnen 12</span>
      </TopBar>
      <Main>
        <Panel>
          <Toggle aria-label="Fäll ut">
            <svg width="9" height="14" viewBox="0 0 9 14"><path d="M1.5,1.5 L7,7 L1.5,12.5" fill="none" stroke="#fff" strokeWidth="2.4" /></svg>
          </Toggle>
          <Head>
            <Title>Sensor</Title>
            <HeadIcons>
              <svg width="17" height="15" viewBox="0 0 17 15"><path d="M0,1.5 H17 M0,7.5 H17 M0,13.5 H17" stroke="#222" strokeWidth="2.6" /></svg>
              <svg width="16" height="16" viewBox="0 0 16 16"><path d="M1,1 L15,15 M15,1 L1,15" stroke="#222" strokeWidth="2.2" /></svg>
            </HeadIcons>
          </Head>
          <Sub>UTRUSTNING</Sub>
          <Tabs>
            <Tab>Data</Tab>
            <Tab>Kommentarer</Tab>
            <Tab>Dokument</Tab>
            <Tab>Logg</Tab>
            <Tab $active>Livedata</Tab>
          </Tabs>
          <Body>
            <Scroller>
              <Section>Livedata</Section>
              {ROWS.map(([n, v, c, alt], i) => (
                <Row key={n} $alt={alt}>
                  <Dot $c={c} $halo={i > 0} />
                  <Name>{n}</Name>
                  <span>{v}</span>
                  <span>1 min sedan</span>
                </Row>
              ))}
              <Cap>Luftfuktighet gränsvärden</Cap>
              <LimitBox>
                <Limit><LimitDot $c="#97e94b" />Bra</Limit>
                <Limit><LimitDot $c="#ff8c00" />OK</Limit>
                <Limit><LimitDot $c="#f44149" />Dåligt</Limit>
              </LimitBox>
              <ChartList>
                {CHARTS.map(c => <Chart key={c.title} c={c} />)}
              </ChartList>
            </Scroller>
            <Track>
              <ArrowUp />
              <Thumb />
              <ArrowDown />
            </Track>
          </Body>
        </Panel>
        <MapArea>
          <Plan />
          <Controls>
            <PlanBox>
              <PlanLabel>Plan 3</PlanLabel>
              <PlanArrow>
                <svg width="14" height="10" viewBox="0 0 14 10"><path d="M1.5,8.5 L7,2.5 L12.5,8.5" fill="none" stroke="#2b2b2b" strokeWidth="2.4" /></svg>
              </PlanArrow>
            </PlanBox>
            <Toolbar>
              <ToolTab>VISA</ToolTab>
              <ToolTab>VERKTYG</ToolTab>
              <ToolTab>VYER</ToolTab>
              <ToolTab $active>MER</ToolTab>
            </Toolbar>
          </Controls>
        </MapArea>
      </Main>
    </Page>
  );
}
